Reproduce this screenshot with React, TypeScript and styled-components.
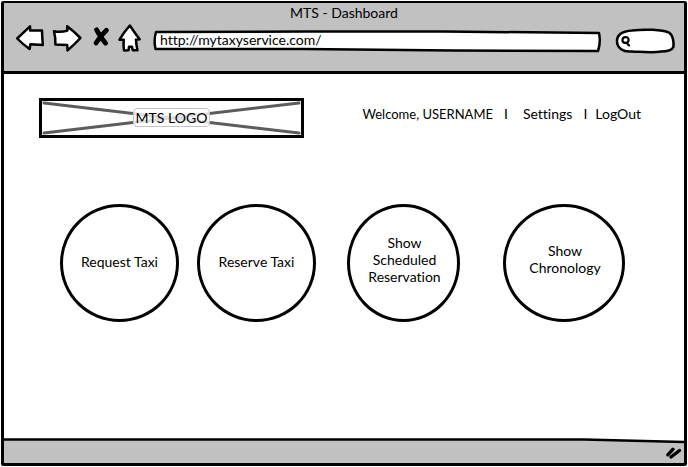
import React from "react";
import styled, { createGlobalStyle } from "styled-components";

const sketchFont = `Lato, "Open Sans", sans-serif`;

const GlobalStyle = createGlobalStyle`
  *, *::before, *::after { box-sizing: border-box; }
  body {
    margin: 0;
    background: #fff;
    color: #000;
    font-family: ${sketchFont};
    font-size: 14px;
    font-variant-ligatures: none;
  }
  button, input { font: inherit; color: inherit; }
`;

const Page = styled.div`
  min-height: 100vh;
  padding: 1px;
  display: flex;
`;

const BrowserWindow = styled.div`
  flex: 1;
  display: flex;
  flex-direction: column;
  border: 3px solid #000;
  border-top-width: 2px;
  border-radius: 2px;
`;

const Chrome = styled.header`
  height: 71px;
  background: #c1c1c1;
  border-bottom: 3px solid #000;
`;

const Title = styled.h1`
  margin: 0;
  padding-top: 1px;
  font-size: 14px;
  font-weight: 400;
  line-height: 18px;
  text-align: center;
`;

const Toolbar = styled.div`
  display: flex;
  align-items: center;
  height: 32px;
  padding: 0 9px 0 10px;
`;

const IconButton = styled.button<{ $width: number; $gap: number }>`
  width: ${(p) => p.$width}px;
  height: 30px;
  margin-right: ${(p) => p.$gap}px;
  padding: 0;
  border: 0;
  background: none;
  svg { display: block; }
`;

const Field = styled.label<{ $wide?: boolean }>`
  position: relative;
  display: flex;
  align-items: center;
  ${(p) => (p.$wide ? "flex: 1; height: 22px; margin: 6px 13px 0 0;" : "width: 60px; height: 26px; margin-top: 5px;")}
`;

const Outline = styled.svg`
  position: absolute;
  inset: 0;
  width: 100%;
  height: 100%;
  overflow: visible;
  path { vector-effect: non-scaling-stroke; }
`;

const FieldInput = styled.input<{ $indent: number }>`
  position: relative;
  width: 100%;
  min-width: 0;
  height: 20px;
  padding: 0 8px 4px ${(p) => p.$indent}px;
  border: 0;
  outline: 0;
  background: transparent;
`;

const SearchGlyph = styled.svg`
  position: absolute;
  left: 4px;
  top: 7px;
`;

const Main = styled.main`
  flex: 1;
  padding-top: 24px;
`;

const TopRow = styled.div`
  display: flex;
  align-items: center;
  justify-content: space-between;
  padding: 0 43px 0 35px;
`;

const Logo = styled.div`
  position: relative;
  display: grid;
  place-items: center;
  width: 265px;
  height: 40px;
  padding-bottom: 1px;
  border: 3px solid #000;
`;

const LogoText = styled.span`
  position: relative;
  padding: 0 2px;
  border: 1px solid #c4c4c4;
  border-radius: 4px;
  background: rgba(255, 255, 255, 0.8);
  line-height: 17px;
`;

const Account = styled.nav`
  display: flex;
  align-items: baseline;
  padding-bottom: 8px;
  line-height: 18px;
`;

const Greeting = styled.span`
  font-size: 13px;
`;

const AccountLink = styled.a`
  color: inherit;
  text-decoration: none;
`;

const Divider = styled.span<{ $before: number; $after: number }>`
  margin: 0 ${(p) => p.$after}px 0 ${(p) => p.$before}px;
`;

const Actions = styled.div`
  display: grid;
  grid-template-columns: 137fr 150fr 156fr 122px;
  justify-items: start;
  padding: 66px 59px 24px 56px;
`;

const CircleButton = styled.button<{ $width: number; $label?: boolean }>`
  width: ${(p) => p.$width}px;
  height: 118px;
  padding: ${(p) => (p.$label ? "0 0 8px 2px" : "0 0 4px")};
  border: 3px solid #000;
  border-radius: 50%;
  background: #fff;
  line-height: 17px;
`;

const StatusBar = styled.footer`
  position: relative;
  display: flex;
  align-items: center;
  justify-content: flex-end;
  height: 25px;
  padding: 5px 1px 0 0;
`;

const Grip = styled.svg`
  position: relative;
`;

const arrowStroke = { fill: "#fff", stroke: "#000", strokeWidth: 2.5, strokeLinejoin: "round" as const };

export default function App() {
  return (
    <>
      <GlobalStyle />
      <Page>
        <BrowserWindow>
          <Chrome>
            <Title>MTS - Dashboard</Title>
            <Toolbar>
              <IconButton $width={32} $gap={5} aria-label="Back">
                <svg width="32" height="30" viewBox="0 0 32 30">
                  <path {...arrowStroke} d="M3.2 15.5 L16 3.3 L16.2 7.6 L28 7.6 Q28.2 14 28.8 22 L16.4 21.3 L15.6 26 Q8.5 21 3.2 15.5Z" />
                </svg>
              </IconButton>
              <IconButton $width={32} $gap={8} aria-label="Forward">
                <svg width="32" height="30" viewBox="0 0 32 30">
                  <path {...arrowStroke} d="M3 8.2 Q10 9.6 16.4 7.6 L16.2 3.3 Q23 8.5 29.4 15 Q24 21 16.6 27.4 L16.2 22 L4.4 21.6 Q4.7 15 3 8.2Z" />
                </svg>
              </IconButton>
              <IconButton $width={20} $gap={6} aria-label="Stop">
                <svg width="20" height="30" viewBox="0 0 20 30">
                  <path d="M5.6 6.8 Q8.5 13 14.6 20.2 M15.4 7.2 Q9.8 12.5 5 20" fill="none" stroke="#000" strokeWidth="4.8" strokeLinecap="round" />
                </svg>
              </IconButton>
              <IconButton $width={24} $gap={12} aria-label="Home">
                <svg width="24" height="30" viewBox="0 0 24 30">
                  <path {...arrowStroke} d="M12.8 2.5 Q17.5 9.5 22.6 16.3 L18.9 16.8 Q19.4 22 20.4 27.3 L15.8 27.2 L15 23.7 L12 23.7 L11.6 27.2 L7 27.4 Q6.2 22 6.8 16.8 L2.5 16.7 Q7 9 12.8 2.5Z" />
                </svg>
              </IconButton>
              <Field $wide>
                <Outline viewBox="0 0 448 22" preserveAspectRatio="none" aria-hidden="true">
                  <path d="M3 2 L150 1.5 L290 1.5 L445 3 Q447 12 444 21 L300 20.5 L150 19 L2.5 19 Q0.5 10 3 2Z" fill="#fff" stroke="#000" strokeWidth="2.5" strokeLinejoin="round" />
                </Outline>
                <FieldInput $indent={7} aria-label="Address" defaultValue="http://mytaxyservice.com/" />
              </Field>
              <Field>
                <Outline viewBox="0 0 60 26" preserveAspectRatio="none" aria-hidden="true">
                  <path d="M2 13 C2 6 9 3 17 2.4 C30 1 47 1.6 54 4.6 C58 7 59 14 58.4 19 C57 22 52 23.5 46 23.6 C38 25 28 24 17 23.4 C8 24.5 2 20 2 13Z" fill="#fff" stroke="#000" strokeWidth="2.5" />
                </Outline>
                <SearchGlyph width="14" height="14" viewBox="0 0 14 14" aria-hidden="true">
                  <path d="M5.8 2.2 C8 1.8 9.7 3 9.6 5 C9.5 7 8 8 6 7.9 C4 7.7 3.4 6.5 3.5 5 C3.6 3.5 4.5 2.4 5.8 2.2Z M7.6 8 L10 10.4" fill="none" stroke="#000" strokeWidth="2.2" strokeLinecap="round" />
                </SearchGlyph>
                <FieldInput $indent={16} aria-label="Search" />
              </Field>
            </Toolbar>
          </Chrome>
          <Main>
            <TopRow>
              <Logo>
                <Outline viewBox="0 0 259 34" preserveAspectRatio="none" aria-hidden="true">
                  <path d="M2 2 L257 32 M2 32 L257 2" fill="none" stroke="#5c5c5c" strokeWidth="3" strokeLinecap="round" />
                </Outline>
                <LogoText>MTS LOGO</LogoText>
              </Logo>
              <Account aria-label="Account">
                <Greeting>Welcome, USERNAME</Greeting>
                <Divider $before={11} $after={15}>I</Divider>
                <AccountLink href="#settings">Settings</AccountLink>
                <Divider $before={11} $after={8}>I</Divider>
                <AccountLink href="#logout">LogOut</AccountLink>
              </Account>
            </TopRow>
            <Actions>
              <CircleButton $width={119}>Request Taxi</CircleButton>
              <CircleButton $width={119}>Reserve Taxi</CircleButton>
              <CircleButton $width={113} $label>
                Show
                <br />
                Scheduled
                <br />
                Reservation
              </CircleButton>
              <CircleButton $width={122} $label>
                Show
                <br />
                Chronology
              </CircleButton>
            </Actions>
          </Main>
          <StatusBar>
            <Outline viewBox="0 0 680 25" preserveAspectRatio="none" aria-hidden="true">
              <path d="M0 1.5 L580 1.5 L680 4 L680 25 L0 25Z" fill="#c1c1c1" />
              <path d="M0 1.5 L580 1.5 L680 4" fill="none" stroke="#000" strokeWidth="2.5" />
            </Outline>
            <Grip width="18" height="16" viewBox="0 0 18 16" aria-hidden="true">
              <path d="M2.8 9.8 L8 4.2 M6 12 L14.5 5.5" fill="none" stroke="#000" strokeWidth="3.4" strokeLinecap="round" />
            </Grip>
          </StatusBar>
        </BrowserWindow>
      </Page>
    </>
  );
}
